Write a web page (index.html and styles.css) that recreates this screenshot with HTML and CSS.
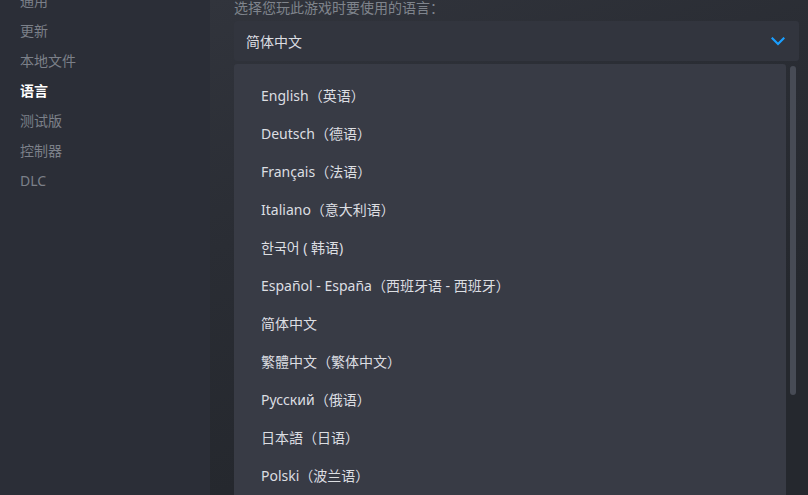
FILE: index.html
```html
<!DOCTYPE html>
<html lang="zh-CN">
<head>
<meta charset="utf-8">
<link rel="stylesheet" href="styles.css">
</head>
<body>
<div class="page">
  <nav class="sidebar">
    <ul class="nav">
      <li class="nav-item">通用</li>
      <li class="nav-item">更新</li>
      <li class="nav-item">本地文件</li>
      <li class="nav-item active">语言</li>
      <li class="nav-item">测试版</li>
      <li class="nav-item">控制器</li>
      <li class="nav-item">DLC</li>
    </ul>
  </nav>
  <main class="main">
    <div class="label">选择您玩此游戏时要使用的语言：</div>
    <div class="select">
      <span class="select-value">简体中文</span>
      <svg class="chevron" width="14" height="9" viewBox="0 0 14 9"><path d="M1.5 1.5 L7 7 L12.5 1.5" fill="none" stroke="#1a9fff" stroke-width="2.2" stroke-linecap="square"/></svg>
    </div>
    <div class="list-wrap">
      <ul class="list">
        <li class="option">English（英语）</li>
        <li class="option">Deutsch（德语）</li>
        <li class="option">Français（法语）</li>
        <li class="option">Italiano（意大利语）</li>
        <li class="option">한국어 ( 韩语)</li>
        <li class="option">Español - España（西班牙语 - 西班牙）</li>
        <li class="option">简体中文</li>
        <li class="option">繁體中文（繁体中文）</li>
        <li class="option">Русский（俄语）</li>
        <li class="option">日本語（日语）</li>
        <li class="option">Polski（波兰语）</li>
      </ul>
      <div class="scroll-track"><div class="scroll-thumb"></div></div>
    </div>
  </main>
</div>
</body>
</html>
```

FILE: styles.css
```css
* { box-sizing: border-box; }
html, body { margin: 0; padding: 0; height: 100%; overflow: hidden; }
body {
  font-family: "Noto Sans", "Noto Sans CJK SC", sans-serif;
  font-size: 14px;
  background: #262930;
}
.page {
  display: flex;
  height: 495px;
  width: 808px;
}
.sidebar {
  width: 210px;
  flex: none;
  background: #2b2e37;
}
.nav {
  list-style: none;
  margin: -14px 0 0 0;
  padding: 0 0 0 20px;
}
.nav-item {
  height: 30px;
  line-height: 30px;
  color: #7c8089;
}
.nav-item.active {
  color: #ffffff;
  font-weight: 700;
}
.main {
  flex: 1;
  padding-left: 24px;
  padding-right: 9px;
  background: linear-gradient(160deg, #31343c 0%, #2a2d34 35%, #25282e 70%);
  display: flex;
  flex-direction: column;
}
.label {
  color: #7f848c;
  height: 22px;
  line-height: 16px;
  margin-top: 0;
}
.select {
  margin-top: 0;
  height: 41px;
  background: #32353e;
  border-radius: 3px;
  display: flex;
  align-items: center;
  justify-content: space-between;
  padding: 1px 14px 0 12px;
  color: #dcdee2;
}
.select-value { line-height: 20px; padding-top: 1px; }
.chevron { display: block; }
.list-wrap {
  margin-top: 3px;
  display: flex;
  flex: 1;
  gap: 4px;
}
.list {
  list-style: none;
  margin: 0;
  width: 552px;
  padding: 13px 0 0 27px;
  background: #383b45;
  border-radius: 3px 3px 0 0;
}
.option {
  height: 38px;
  line-height: 38px;
  color: #dcdee2;
  white-space: nowrap;
}
.scroll-track {
  width: 6px;
  padding-top: 2px;
}
.scroll-thumb {
  width: 6px;
  height: 329px;
  background: #474b55;
  border-radius: 3px;
}
```
